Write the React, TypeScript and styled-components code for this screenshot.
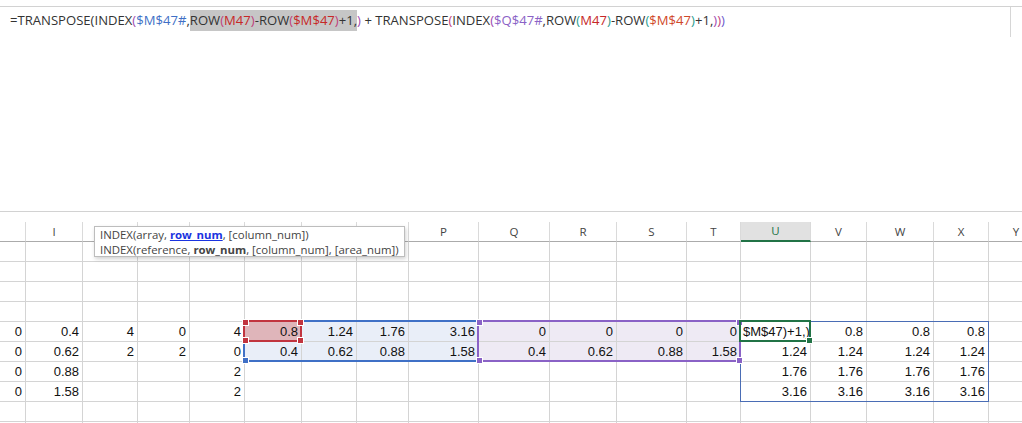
import React from 'react';
import styled, { createGlobalStyle, css } from 'styled-components';

const GlobalStyle = createGlobalStyle`
  html, body { margin: 0; padding: 0; background: #ffffff; }
  body { width: 1022px; height: 423px; overflow: hidden; }
`;

const Page = styled.div`
  width: 1022px;
  height: 423px;
  overflow: hidden;
  display: flex;
  flex-direction: column;
  background: #ffffff;
`;

const FormulaBar = styled.div`
  margin-top: 6px;
  height: 206px;
  box-sizing: border-box;
  border-top: 1px solid #d2d2d2;
  border-bottom: 1px solid #d2d2d2;
  display: flex;
  flex-shrink: 0;
`;

const FormulaText = styled.div`
  flex: 1;
  padding: 3px 0 0 10px;
  font-family: "Open Sans", "Noto Sans", sans-serif;
  font-size: 13.1px;
  line-height: 20px;
  color: #333333;
  white-space: nowrap;
`;

const SideEdge = styled.div`
  width: 11px;
  height: 30px;
  border-left: 1px solid #d6d6d6;
`;

const Tok = styled.span<{ $c?: string }>`
  color: ${(p) => p.$c || '#333333'};
`;

const Highlight = styled.span`
  background: #c6c6c6;
  padding: 1px 0 2px;
`;

const Gap = styled.div`
  height: 10px;
  flex-shrink: 0;
`;

const gridTemplate = css`
  display: grid;
  grid-template-columns: 26px 57px 55px 52px 55px 57px 55px 52px 70px 71px 67px 70px 54px 70px 56px 67px 55px 55px;
  grid-template-rows: 20px;
  grid-auto-rows: 20px;
`;

const Sheet = styled.div`
  position: relative;
  width: 1044px;
  ${gridTemplate}
`;

const OverlayLayer = styled.div`
  position: absolute;
  inset: 0;
  pointer-events: none;
  ${gridTemplate}
`;

const HeaderCell = styled.div<{ $selected?: boolean }>`
  box-sizing: border-box;
  border-right: 1px solid #dadada;
  border-bottom: 1px solid #ababab;
  font-family: "Open Sans", "Noto Sans", sans-serif;
  font-size: 11.5px;
  line-height: 19px;
  text-align: center;
  color: #444444;
  ${(p) =>
    p.$selected &&
    css`
      background: #e1e1e1;
      border-bottom: 2px solid #217346;
      color: #217346;
      line-height: 18px;
    `}
`;

type Fill = 'red' | 'blue' | 'purple' | undefined;
const fills: Record<string, string> = {
  red: '#dfb5ba',
  blue: '#e9eef8',
  purple: '#eeeaf4',
};

const Cell = styled.div<{ $fill?: Fill; $left?: boolean }>`
  box-sizing: border-box;
  border-right: 1px solid #d4d4d4;
  border-bottom: 1px solid #d4d4d4;
  background: ${(p) => (p.$fill ? fills[p.$fill] : '#ffffff')};
  font-family: "Liberation Sans", Arial, sans-serif;
  font-size: 13px;
  line-height: 20px;
  color: #111111;
  text-align: ${(p) => (p.$left ? 'left' : 'right')};
  padding: ${(p) => (p.$left ? '0 0 0 2px' : '0 3px 0 0')};
  white-space: nowrap;
  overflow: hidden;
`;

/* A range outline laid on the overlay grid: spans the cells it encloses,
   and reaches back over the gridline on its top and left side. */
const RangeBox = styled.div<{ $cols: string; $rows: string; $c: string; $t: number }>`
  position: relative;
  box-sizing: border-box;
  grid-column: ${(p) => p.$cols};
  grid-row: ${(p) => p.$rows};
  margin: -${(p) => p.$t}px 0 0 -${(p) => p.$t}px;
  border: ${(p) => p.$t}px solid ${(p) => p.$c};
`;

type Corner = 'tl' | 'tr' | 'bl' | 'br';
const Handle = styled.div<{ $at: Corner; $c: string }>`
  position: absolute;
  width: 5px;
  height: 5px;
  background: ${(p) => p.$c};
  border: 1px solid #ffffff;
  ${(p) => (p.$at[0] === 't' ? 'top: -3px;' : 'bottom: -4px;')}
  ${(p) => (p.$at[1] === 'l' ? 'left: -3px;' : 'right: -4px;')}
`;

const Tooltip = styled.div`
  position: absolute;
  left: 94px;
  top: 4px;
  width: 311px;
  height: 31px;
  box-sizing: border-box;
  background: #ffffff;
  border: 1px solid #bdbdbd;
  box-shadow: 1px 2px 4px rgba(0, 0, 0, 0.18);
  padding: 0 0 0 5px;
  font-family: "Open Sans", "Noto Sans", sans-serif;
  font-size: 11.4px;
  color: #444444;
  white-space: nowrap;
  display: flex;
  flex-direction: column;
  overflow: hidden;
`;

const TipLine = styled.div`
  line-height: 15px;
  height: 15px;
`;

const ArgActive = styled.span`
  color: #1a33e0;
  font-weight: 700;
  text-decoration: underline;
`;

const ArgBold = styled.span`
  font-weight: 700;
`;

const COLS = ['H', 'I', 'J', 'K', 'L', 'M', 'N', 'O', 'P', 'Q', 'R', 'S', 'T', 'U', 'V', 'W', 'X', 'Y'];

const E = '';
const blank = () => Array(18).fill(E) as string[];
const ROWS: string[][] = [
  blank(),
  blank(),
  blank(),
  blank(),
  ['0', '0.4', '4', '0', '4', '0.8', '1.24', '1.76', '3.16', '0', '0', '0', '0', '$M$47)+1,)', '0.8', '0.8', '0.8', E],
  ['0', '0.62', '2', '2', '0', '0.4', '0.62', '0.88', '1.58', '0.4', '0.62', '0.88', '1.58', '1.24', '1.24', '1.24', '1.24', E],
  ['0', '0.88', E, E, '2', E, E, E, E, E, E, E, E, '1.76', '1.76', '1.76', '1.76', E],
  ['0', '1.58', E, E, '2', E, E, E, E, E, E, E, E, '3.16', '3.16', '3.16', '3.16', E],
  blank(),
  blank(),
];

function fillFor(r: number, c: number): Fill {
  if (r !== 4 && r !== 5) return undefined;
  if (r === 4 && c === 5) return 'red';
  if (c >= 5 && c <= 8) return 'blue';
  if (c >= 9 && c <= 12) return 'purple';
  return undefined;
}

const BLUE = '#3f70c6';
const RED = '#c1343f';
const PURPLE = '#8a62c6';
const GREEN = '#217346';
const P1 = '#a04ab0';
const P2 = '#c0407c';
const P3 = '#2a9d8f';
const REF_RED = '#c62828';

export default function App() {
  return (
    <Page>
      <GlobalStyle />
      <FormulaBar>
        <FormulaText>
          <Tok>=TRANSPOSE(INDEX</Tok>
          <Tok $c={P1}>(</Tok>
          <Tok $c={BLUE}>$M$47#</Tok>
          <Tok>,</Tok>
          <Highlight>
            <Tok>ROW</Tok>
            <Tok $c={P2}>(</Tok>
            <Tok $c={REF_RED}>M47</Tok>
            <Tok $c={P2}>)</Tok>
            <Tok>-ROW</Tok>
            <Tok $c={P2}>(</Tok>
            <Tok $c={REF_RED}>$M$47</Tok>
            <Tok $c={P2}>)</Tok>
            <Tok>+1,</Tok>
          </Highlight>
          <Tok $c={P1}>)</Tok>
          <Tok> + TRANSPOSE</Tok>
          <Tok $c={P2}>(</Tok>
          <Tok>INDEX</Tok>
          <Tok $c={P1}>(</Tok>
          <Tok $c={PURPLE}>$Q$47#</Tok>
          <Tok>,ROW</Tok>
          <Tok $c={P3}>(</Tok>
          <Tok $c={REF_RED}>M47</Tok>
          <Tok $c={P3}>)</Tok>
          <Tok>-ROW</Tok>
          <Tok $c={P3}>(</Tok>
          <Tok $c="#d0482a">$M$47</Tok>
          <Tok $c={P3}>)</Tok>
          <Tok>+1,</Tok>
          <Tok $c={P1}>)</Tok>
          <Tok $c={P2}>)</Tok>
          <Tok $c="#6a5acd">)</Tok>
        </FormulaText>
        <SideEdge />
      </FormulaBar>
      <Gap />
      <Sheet>
        {COLS.map((c) => (
          <HeaderCell key={c} $selected={c === 'U'}>
            {c === 'H' ? '' : c}
          </HeaderCell>
        ))}
        {ROWS.map((row, r) =>
          row.map((v, c) => (
            <Cell key={`${r}-${c}`} $fill={fillFor(r, c)} $left={r === 4 && c === 13}>
              {v}
            </Cell>
          ))
        )}

        <OverlayLayer>
          {/* spill range U47:X50 */}
          <RangeBox $cols="14 / 18" $rows="6 / 10" $c="#4a6db5" $t={1} />
          {/* $M$47# -> M47:P48 */}
          <RangeBox $cols="6 / 10" $rows="6 / 8" $c={BLUE} $t={2}>
            <Handle $at="bl" $c={BLUE} />
          </RangeBox>
          {/* $Q$47# -> Q47:T48 */}
          <RangeBox $cols="10 / 14" $rows="6 / 8" $c={PURPLE} $t={2}>
            <Handle $at="tl" $c={PURPLE} />
            <Handle $at="tr" $c={PURPLE} />
            <Handle $at="bl" $c={PURPLE} />
            <Handle $at="br" $c={PURPLE} />
          </RangeBox>
          {/* M47 */}
          <RangeBox $cols="6 / 7" $rows="6 / 7" $c={RED} $t={2}>
            <Handle $at="tl" $c={RED} />
            <Handle $at="tr" $c={RED} />
            <Handle $at="bl" $c={RED} />
            <Handle $at="br" $c={RED} />
          </RangeBox>
          {/* active cell U47 */}
          <RangeBox $cols="14 / 15" $rows="6 / 7" $c={GREEN} $t={2}>
            <Handle $at="br" $c={GREEN} />
          </RangeBox>
        </OverlayLayer>

        <Tooltip>
          <TipLine>
            INDEX(array, <ArgActive>row_num</ArgActive>, [column_num])
          </TipLine>
          <TipLine>
            INDEX(reference, <ArgBold>row_num</ArgBold>, [column_num], [area_num])
          </TipLine>
        </Tooltip>
      </Sheet>
    </Page>
  );
}
